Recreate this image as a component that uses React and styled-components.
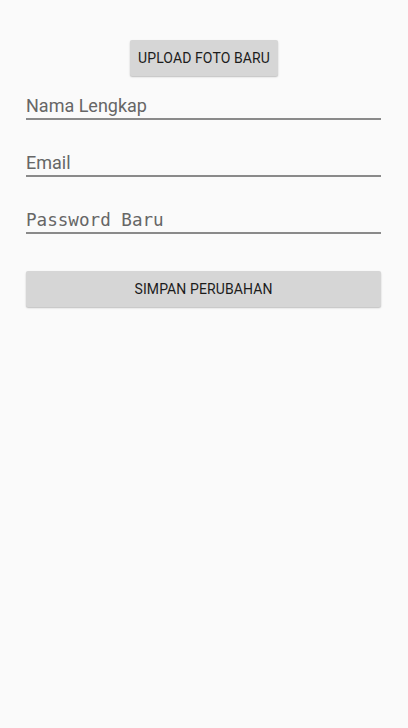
import React from 'react'
import styled, { createGlobalStyle } from 'styled-components'

const GlobalStyle = createGlobalStyle`
    html, body {
        margin:0;
        padding:0;
        background:#fafafa;
    }
    body {
        font-family: Roboto, "Noto Sans", sans-serif;
    }
`

function App() {
    return (
        <Page>
            <GlobalStyle />
            <UploadButton>Upload Foto Baru</UploadButton>
            <Form>
                <Field><Hint>Nama Lengkap</Hint></Field>
                <Field><Hint>Email</Hint></Field>
                <Field><Hint mono>Password Baru</Hint></Field>
            </Form>
            <SaveButton>Simpan Perubahan</SaveButton>
        </Page>
    )
}

export default App

const Page = styled.div`
    width:408px;
    min-height:728px;
    box-sizing:border-box;
    padding:40px 27px 0 26px;
    display:flex;
    flex-direction:column;
    align-items:center;
`

const Button = styled.div`
    height:36px;
    background:#d6d6d6;
    color:#1c1c1c;
    display:flex;
    justify-content:center;
    align-items:center;
    border-radius:2px;
    box-shadow:0 1px 2px rgba(0,0,0,.18), 0 1px 1px rgba(0,0,0,.08);
    text-transform:uppercase;
    font-family: Roboto, sans-serif;
    font-size:14px;
    font-weight:400;
    letter-spacing:0.1px;
    box-sizing:border-box;
`

const UploadButton = styled(Button)`
    width:148px;
    margin-left:1px;
`

const SaveButton = styled(Button)`
    align-self:stretch;
    margin-top:37px;
`

const Form = styled.div`
    align-self:stretch;
    display:flex;
    flex-direction:column;
    gap:31px;
    margin-top:18px;
`

const Field = styled.div`
    height:24px;
    border-bottom:2px solid #8a8a8a;
    display:flex;
    align-items:center;
`

const Hint = styled.span`
    font-family:${p => p.mono ? '"DejaVu Sans Mono", monospace' : 'Roboto, "Noto Sans", sans-serif'};
    font-size:${p => p.mono ? '17.6px' : '18px'};
    line-height:24px;
    color:#666;
`
